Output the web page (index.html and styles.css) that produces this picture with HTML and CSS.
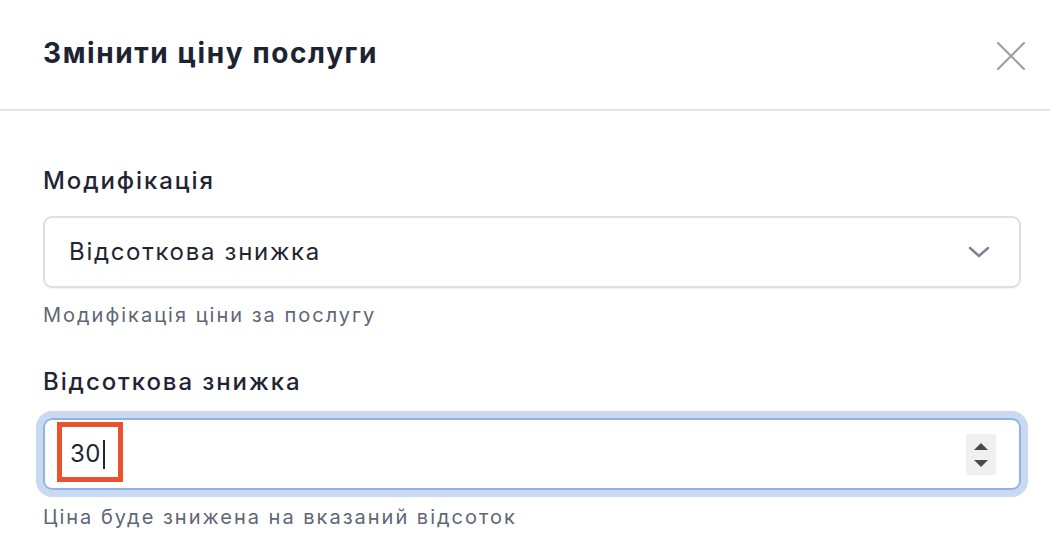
FILE: index.html
```html
<!DOCTYPE html>
<html lang="uk">
<head>
<meta charset="utf-8">
<title>Змінити ціну послуги</title>
<link rel="stylesheet" href="styles.css">
</head>
<body>
<div class="modal">
  <header class="modal-header">
    <h1 class="modal-title">Змінити ціну послуги</h1>
    <button class="close-btn" aria-label="Закрити">
      <svg width="28" height="28" viewBox="0 0 28 28" fill="none" stroke="#9ca0a8" stroke-width="2.2" stroke-linecap="round">
        <path d="M1 1 L27 27 M27 1 L1 27"/>
      </svg>
    </button>
  </header>
  <div class="modal-body">
    <div class="field">
      <label class="field-label">Модифікація</label>
      <div class="select">
        <span class="select-value">Відсоткова знижка</span>
        <svg class="chevron" width="22" height="12" viewBox="0 0 22 12" fill="none" stroke="#7b8294" stroke-width="2.4" stroke-linecap="round" stroke-linejoin="round">
          <path d="M2 2 L11 10 L20 2"/>
        </svg>
      </div>
      <p class="field-help">Модифікація ціни за послугу</p>
    </div>
    <div class="field field-second">
      <label class="field-label">Відсоткова знижка</label>
      <div class="input focused">
        <span class="input-value">30</span><span class="caret"></span>
        <span class="highlight"></span>
        <span class="spinner">
          <svg width="30" height="41" viewBox="0 0 30 41">
            <rect width="30" height="41" fill="#f0f0f0"/>
            <path d="M8 16 L15 9 L22 16 Z" fill="#4a4a4a"/>
            <path d="M8 26 L22 26 L15 33 Z" fill="#4a4a4a"/>
          </svg>
        </span>
      </div>
      <p class="field-help">Ціна буде знижена на вказаний відсоток</p>
    </div>
  </div>
</div>
</body>
</html>
```

FILE: styles.css
```css
* { box-sizing: border-box; }

html, body {
  margin: 0;
  padding: 0;
  background: #ffffff;
}

body {
  font-family: Inter, "Noto Sans", "Liberation Sans", sans-serif;
  color: #1f2533;
  width: 1050px;
  height: 556px;
  overflow: hidden;
}

.modal-header {
  height: 111px;
  display: flex;
  align-items: flex-start;
  justify-content: space-between;
  padding: 39px 25px 0 43px;
  border-bottom: 2px solid #e1e4ea;
}

.modal-title {
  margin: 0;
  font-size: 28px;
  line-height: 28px;
  font-weight: 700;
  color: #1c2434;
  letter-spacing: 1.6px;
}

.close-btn {
  margin-top: 3px;
  padding: 0;
  border: 0;
  background: none;
  width: 28px;
  height: 28px;
  display: flex;
}

.modal-body {
  padding: 0 29px 0 43px;
}

.field {
  display: flex;
  flex-direction: column;
}

.field-label {
  margin-top: 58px;
  font-size: 24px;
  line-height: 24px;
  font-weight: 500;
  color: #1f2533;
  letter-spacing: 1.9px;
}

.field-second .field-label {
  margin-top: 45px;
}

.select {
  margin-top: 23px;
  height: 72px;
  border: 2px solid #dcdfe5;
  border-radius: 9px;
  display: flex;
  align-items: center;
  justify-content: space-between;
  padding: 0 29px 0 24px;
  box-shadow: 0 1px 2px rgba(15, 23, 42, 0.06);
}

.select-value {
  font-size: 24px;
  line-height: 24px;
  color: #1f2533;
  letter-spacing: 1.7px;
}

.field-help {
  margin: 17px 0 0;
  font-size: 20px;
  line-height: 20px;
  color: #5f6675;
  letter-spacing: 2px;
}

.input {
  position: relative;
  margin-top: 24px;
  height: 72px;
  border: 2px solid #8fb3e2;
  border-radius: 9px;
  display: flex;
  align-items: center;
  padding: 0 23px 0 25px;
}

.input.focused {
  box-shadow: 0 0 0 7px #cad9f2;
}

.input-value {
  font-size: 24px;
  line-height: 24px;
  color: #1f2533;
  letter-spacing: 0.4px;
}

.caret {
  width: 2px;
  height: 29px;
  background: #1f2533;
  margin-left: 2px;
}

.highlight {
  position: absolute;
  left: 12px;
  top: 2px;
  width: 66px;
  height: 60px;
  border: 5px solid #e8532e;
  pointer-events: none;
}

.spinner {
  margin-left: auto;
  display: flex;
}
```
